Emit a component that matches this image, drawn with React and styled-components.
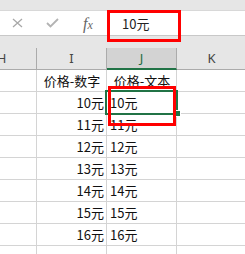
import React from "react";
import styled, { createGlobalStyle } from "styled-components";

const Global = createGlobalStyle`
  html, body { margin: 0; padding: 0; background: #e6e6e6; }
  body { width: 245px; height: 254px; overflow: hidden; font-family: "Noto Sans CJK SC", "Noto Sans", sans-serif; }
`;

const Page = styled.div`
  position: relative;
  width: 245px;
  height: 254px;
  overflow: hidden;
  background: #e6e6e6;
`;

const TopStrip = styled.div`
  height: 10px;
  background: #e6e6e6;
`;

const FormulaBar = styled.div`
  box-sizing: border-box;
  height: 26px;
  display: flex;
  background: #ffffff;
  border-top: 1px solid #d8d8d8;
  border-bottom: 1px solid #c8c8c8;
`;

const IconSlot = styled.div`
  width: ${(p) => p.$w}px;
  display: flex;
  align-items: center;
  justify-content: center;
`;

const Fx = styled.span`
  font-family: "Liberation Serif", "DejaVu Serif", serif;
  font-style: italic;
  color: #666666;
  font-size: 16px;
  line-height: 1;
  margin-top: 1px;
  & > small {
    font-size: 12px;
  }
`;

const FormulaInput = styled.div`
  flex: 1;
  margin-left: 3px;
  border-left: 1px solid #d4d4d4;
  display: flex;
  align-items: center;
  padding-left: 12px;
  font-size: 13px;
  color: #222;
`;

const Gap = styled.div`
  height: 12px;
`;

const SheetClip = styled.div`
  overflow: hidden;
  background: #ffffff;
`;

const Grid = styled.div`
  display: grid;
  grid-template-columns: repeat(4, 70px);
  margin-left: -33px;
`;

const HeaderCell = styled.div`
  box-sizing: border-box;
  height: 22px;
  background: ${(p) => (p.$sel ? "#d3d3d3" : "#e6e6e6")};
  border-right: 1px solid #ababab;
  border-bottom: ${(p) => (p.$sel ? "2px solid #217346" : "1px solid #ababab")};
  display: flex;
  align-items: center;
  justify-content: center;
  font-family: "Noto Sans", "Liberation Sans", sans-serif;
  font-size: 13px;
  color: ${(p) => (p.$sel ? "#1d6b41" : "#444444")};
  padding-bottom: ${(p) => (p.$sel ? "0px" : "1px")};
`;

const Cell = styled.div`
  box-sizing: border-box;
  height: 22px;
  border-right: 1px solid #d4d4d4;
  border-bottom: 1px solid #d4d4d4;
  display: flex;
  align-items: center;
  justify-content: ${(p) => (p.$align === "right" ? "flex-end" : p.$align === "center" ? "center" : "flex-start")};
  padding: 0 2px 0 3px;
  font-size: 13px;
  color: #111;
  white-space: nowrap;
  background: #fff;
`;

const Box = styled.div`
  position: absolute;
  box-sizing: border-box;
  pointer-events: none;
  left: ${(p) => p.$x}px;
  top: ${(p) => p.$y}px;
  width: ${(p) => p.$w}px;
  height: ${(p) => p.$h}px;
`;

const Selection = styled(Box)`
  border: 2px solid #217346;
`;

const Highlight = styled(Box)`
  border: 3px solid #ff0000;
`;

const Handle = styled.div`
  position: absolute;
  left: 174px;
  top: 110px;
  width: 5px;
  height: 5px;
  background: #217346;
  border: 1px solid #ffffff;
`;

const CrossIcon = () => (
  <svg width="11" height="10" viewBox="0 0 11 10">
    <path d="M1 1 L10 9 M10 1 L1 9" stroke="#a8a8a8" strokeWidth="1.3" fill="none" />
  </svg>
);

const CheckIcon = () => (
  <svg width="13" height="10" viewBox="0 0 13 10">
    <path d="M1 5 L4.5 8.5 L12 1" stroke="#b3b3b3" strokeWidth="1.8" fill="none" />
  </svg>
);

const cols = ["H", "I", "J", "K"];
const rows = [
  ["", "价格-数字", "价格-文本", ""],
  ...[10, 11, 12, 13, 14, 15, 16].map((n) => ["", `${n}元`, `${n}元`, ""]),
  ["", "", "", ""],
];

export default function App() {
  return (
    <Page>
      <Global />
      <TopStrip />
      <FormulaBar>
        <IconSlot $w={34}>
          <CrossIcon />
        </IconSlot>
        <IconSlot $w={36}>
          <CheckIcon />
        </IconSlot>
        <IconSlot $w={36}>
          <Fx>
            f<small>x</small>
          </Fx>
        </IconSlot>
        <FormulaInput>10元</FormulaInput>
      </FormulaBar>
      <Gap />
      <SheetClip>
        <Grid>
          {cols.map((c) => (
            <HeaderCell key={c} $sel={c === "J"}>
              {c}
            </HeaderCell>
          ))}
          {rows.map((r, ri) =>
            r.map((v, ci) => (
              <Cell
                key={`${ri}-${ci}`}
                $align={ri === 0 ? "center" : ci === 1 ? "right" : "left"}
              >
                {v}
              </Cell>
            ))
          )}
        </Grid>
      </SheetClip>
      <Selection $x={105} $y={90} $w={73} $h={25} />
      <Handle />
      <Highlight $x={107} $y={10} $w={74} $h={32} />
      <Highlight $x={108} $y={86} $w={68} $h={40} />
    </Page>
  );
}
